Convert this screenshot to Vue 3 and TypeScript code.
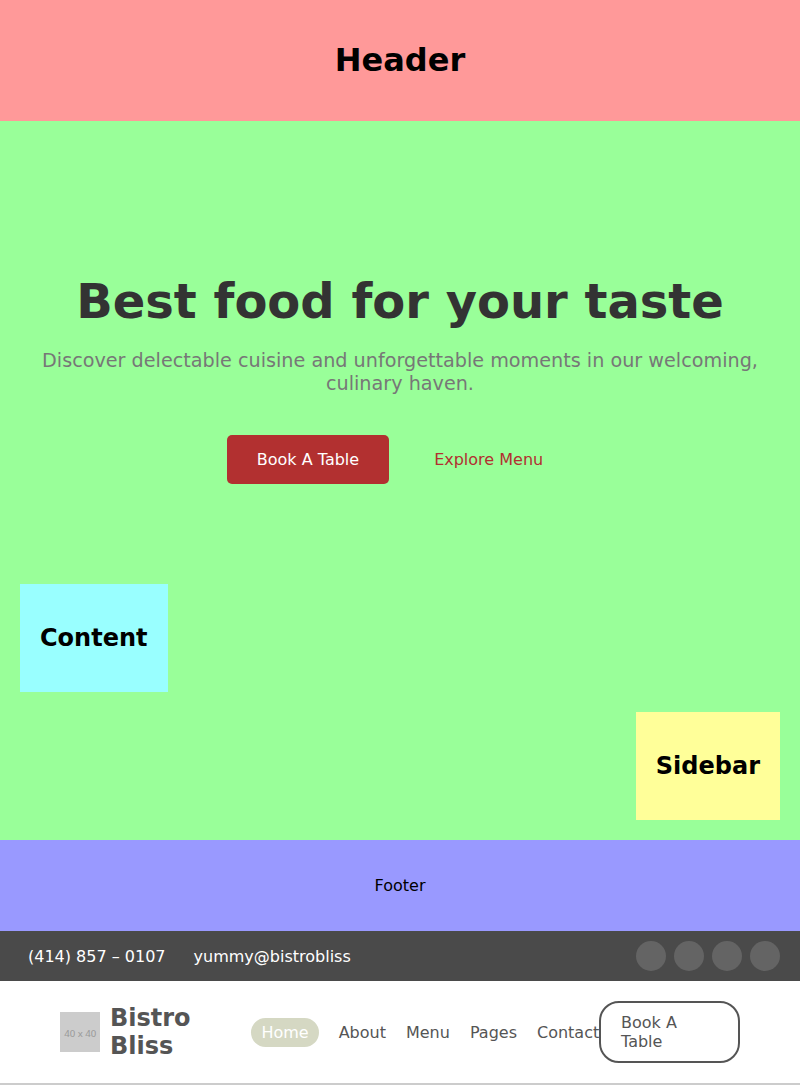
<script setup lang="ts">
const links: string[] = ['About', 'Menu', 'Pages', 'Contact']
</script>

<template>
  <div class="page">
    <header class="header"><h1>Header</h1></header>
    <main class="main">
      <section class="hero">
        <h1>Best food for your taste</h1>
        <p>Discover delectable cuisine and unforgettable moments in our welcoming, culinary haven.</p>
        <div class="actions">
          <a class="book">Book A Table</a>
          <a class="explore">Explore Menu</a>
        </div>
      </section>
      <section class="box content"><h2>Content</h2></section>
      <aside class="box sidebar"><h2>Sidebar</h2></aside>
    </main>
    <footer class="footer">Footer</footer>
    <div class="topbar">
      <div class="contacts"><span>(414) 857 – 0107</span><span>yummy@bistrobliss</span></div>
      <div class="socials"><i v-for="n in 4" :key="n"></i></div>
    </div>
    <div class="navbar">
      <div class="brand">
        <svg width="40" height="40" viewBox="0 0 40 40">
          <rect width="40" height="40" fill="#ccc" />
          <text x="20.2" y="25" text-anchor="middle" class="ph">40 x 40</text>
        </svg>
        <div class="name">Bistro Bliss</div>
      </div>
      <nav>
        <a class="active">Home</a>
        <a v-for="l in links" :key="l">{{ l }}</a>
      </nav>
      <a class="reserve">Book A Table</a>
    </div>
  </div>
</template>

<style>
body { margin: 0; }
</style>

<style scoped>
.page { width: 800px; height: 1085px; overflow: hidden; box-sizing: border-box; font-family: "DejaVu Sans", sans-serif; font-size: 16px; color: #000; background: #fff; }
h1, h2, p { margin: 0; }
.header { height: 121px; display: flex; align-items: center; justify-content: center; background: #f99; }
.header h1 { font-size: 32px; line-height: 37px; }
.main { height: 719px; box-sizing: border-box; padding: 0 20px 20px; display: flex; flex-direction: column; background: #9f9; }
.hero { height: 463px; box-sizing: border-box; padding-top: 152px; display: flex; flex-direction: column; align-items: center; text-align: center; }
.hero h1 { font-size: 48px; line-height: 56px; color: #333; white-space: nowrap; }
.hero p { margin-top: 20px; font-size: 19.2px; line-height: 23px; color: #777; }
.actions { margin-top: 40px; display: flex; }
.actions a { box-sizing: border-box; height: 49px; padding: 15px 30px; line-height: 19px; white-space: nowrap; }
.book { background: #b23030; color: #fff; border-radius: 5px; }
.explore { margin-left: 15px; color: #b23030; }
.box { box-sizing: border-box; height: 108px; padding: 40px 20px; }
.box h2 { font-size: 24px; line-height: 28px; }
.content { align-self: flex-start; background: #9ff; }
.sidebar { align-self: flex-end; margin-top: 20px; background: #ff9; }
.footer { height: 91px; display: flex; align-items: center; justify-content: center; background: #99f; }
.topbar { height: 50px; box-sizing: border-box; padding: 0 20px 0 28px; display: flex; align-items: center; justify-content: space-between; background: #4a4a4a; color: #fff; }
.contacts { display: flex; gap: 28px; }
.socials { display: flex; gap: 8px; }
.socials i { width: 30px; height: 30px; border-radius: 50%; background: #646464; }
.navbar { height: 104px; box-sizing: border-box; padding: 20px 60px; border-bottom: 2px solid #ccc; display: flex; align-items: center; color: #555; }
.brand { width: 191px; display: flex; align-items: center; gap: 10px; flex-shrink: 0; }
.ph { font: 9.6px "Noto Sans", sans-serif; fill: #999; }
.name { width: 90px; font-size: 24px; line-height: 28px; font-weight: bold; }
nav { width: 348px; flex-shrink: 0; display: flex; gap: 20px; align-items: center; }
nav a { line-height: 19px; }
nav .active { padding: 5px 10px 5px 10.4px; border-radius: 15px; background: #d5d8c3; color: #fff; }
.reserve { box-sizing: border-box; width: 141px; height: 62px; padding: 10px 20px; border: 2px solid #555; border-radius: 20px; line-height: 19px; flex-shrink: 0; }
</style>
